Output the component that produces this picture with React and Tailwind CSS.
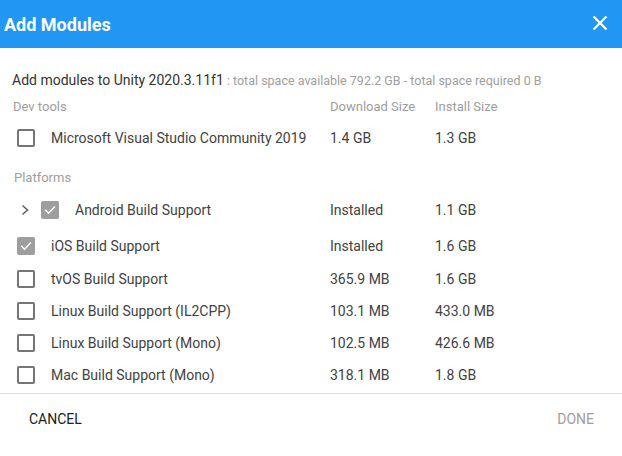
import React from "react";

function Box({ checked }) {
  if (checked) {
    return (
      <div className="w-[18px] h-[18px] rounded-[2px] bg-[#9e9e9e] flex items-center justify-center shrink-0">
        <svg width="14" height="14" viewBox="0 0 24 24" fill="none">
          <path d="M4.5 12.5 L9.5 17.5 L19.5 7" stroke="#fff" strokeWidth="2.4" strokeLinecap="square" />
        </svg>
      </div>
    );
  }
  return <div className="w-[18px] h-[18px] rounded-[2px] border-2 border-[#757575] shrink-0" />;
}

function Row({ label, dl, inst, checked, expand, className = "" }) {
  return (
    <div className={"flex items-center h-[32px] text-[14px] text-[#424242] " + className}>
      <div className="w-[330px] flex items-center">
        {expand ? (
          <>
            <svg className="ml-[21px] mr-[11px] shrink-0" width="9" height="12" viewBox="0 0 9 12" fill="none">
              <path d="M1.5 1.5 L6.5 6 L1.5 10.5" stroke="#616161" strokeWidth="1.6" />
            </svg>
            <Box checked={checked} />
            <span className="ml-[16px]">{label}</span>
          </>
        ) : (
          <>
            <div className="ml-[17px]">
              <Box checked={checked} />
            </div>
            <span className="ml-[16px]">{label}</span>
          </>
        )}
      </div>
      <div className="w-[105px]">{dl}</div>
      <div>{inst}</div>
    </div>
  );
}

export default function App() {
  return (
    <div className="w-[622px] h-[456px] bg-white font-['Roboto',sans-serif] flex flex-col">
      <div className="h-[48px] bg-[#2196f3] flex items-center justify-between pl-[4px] pr-[14px] shrink-0">
        <span className="text-[18px] font-bold text-white">Add Modules</span>
        <svg width="16" height="16" viewBox="0 0 16 16" className="mt-[-3px]">
          <path d="M1.5 1.5 L14.5 14.5 M14.5 1.5 L1.5 14.5" stroke="#fff" strokeWidth="2.3" />
        </svg>
      </div>
      <div className="flex-1">
        <div className="mt-[24px] ml-[12px] h-[16px] leading-[16px] whitespace-nowrap">
          <span className="text-[14px] text-[#333]">Add modules to Unity 2020.3.11f1</span>
          <span className="text-[12.5px] text-[#9e9e9e]"> : total space available 792.2 GB - total space required 0 B</span>
        </div>
        <div className="mt-[11px] h-[16px] leading-[16px] flex text-[13px] text-[#9e9e9e]">
          <div className="w-[330px] pl-[13px]">Dev tools</div>
          <div className="w-[105px]">Download Size</div>
          <div>Install Size</div>
        </div>
        <Row className="mt-[7px]" label="Microsoft Visual Studio Community 2019" dl="1.4 GB" inst="1.3 GB" />
        <div className="mt-[16px] h-[16px] leading-[16px] pl-[14px] text-[13px] text-[#9e9e9e]">Platforms</div>
        <Row className="mt-[8px]" expand checked label="Android Build Support" dl="Installed" inst="1.1 GB" />
        <Row className="mt-[4px]" checked label="iOS Build Support" dl="Installed" inst="1.6 GB" />
        <Row className="mt-[1px]" label="tvOS Build Support" dl="365.9 MB" inst="1.6 GB" />
        <Row label="Linux Build Support (IL2CPP)" dl="103.1 MB" inst="433.0 MB" />
        <Row label="Linux Build Support (Mono)" dl="102.5 MB" inst="426.6 MB" />
        <Row label="Mac Build Support (Mono)" dl="318.1 MB" inst="1.8 GB" />
      </div>
      <div className="h-[1px] bg-[#e0e0e0] shrink-0 mt-[2px]" />
      <div className="h-[62px] shrink-0 flex items-start justify-between pt-[17px] pl-[29px] pr-[28px] text-[14px] leading-[16px]">
        <span className="text-[#212121]">CANCEL</span>
        <span className="text-[#9e9e9e]">DONE</span>
      </div>
    </div>
  );
}
